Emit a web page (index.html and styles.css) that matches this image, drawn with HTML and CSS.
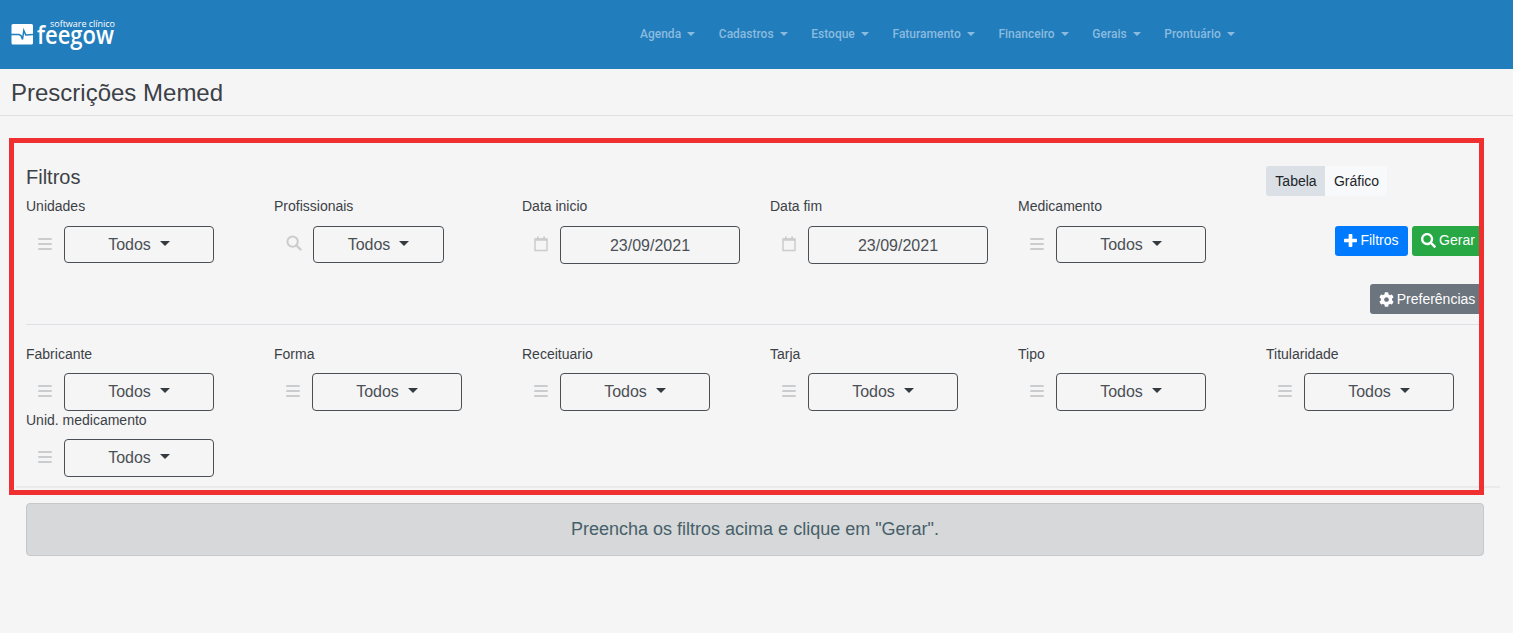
FILE: index.html
```
<!DOCTYPE html>
<html lang="pt-BR">
<head>
<meta charset="utf-8">
<title>Prescrições Memed</title>
<link rel="stylesheet" href="styles.css">
</head>
<body>

<!-- icons -->
<svg class="sprite" width="0" height="0">
	<symbol id="bars" viewBox="0 0 14 14"><path d="M1 2h12M1 7h12M1 12h12" stroke="currentColor" stroke-width="2" stroke-linecap="round"/></symbol>
	<symbol id="search-thin" viewBox="0 0 16 16"><circle cx="6.6" cy="6.6" r="5.200" fill="none" stroke="currentColor" stroke-width="2"/><path d="M10.500 10.500l4 4" stroke="currentColor" stroke-width="2.400" stroke-linecap="round"/></symbol>
	<symbol id="calendar" viewBox="0 0 14 16"><path d="M1 3h12v11.500H1z" fill="none" stroke="currentColor" stroke-width="1.500" stroke-linejoin="round"/><path d="M.7 2.500h12.600v2.200H.7zM3 .5h1.800V3H3zM9.200.5H11V3H9.200z" fill="currentColor"/></symbol>
	<symbol id="plus" viewBox="0 0 448 512"><path fill="currentColor" d="M416 192H288V64c0-17.670-14.330-32-32-32h-64c-17.670 0-32 14.330-32 32v128H32c-17.670 0-32 14.330-32 32v64c0 17.670 14.330 32 32 32h128v128c0 17.670 14.330 32 32 32h64c17.670 0 32-14.330 32-32V320h128c17.670 0 32-14.330 32-32v-64c0-17.670-14.330-32-32-32z"/></symbol>
	<symbol id="search" viewBox="0 0 512 512"><path fill="currentColor" d="M505 442.7L405.3 343c-4.5-4.5-10.6-7-17-7H372c27.600-35.300 44-79.700 44-128C416 93.100 322.900 0 208 0S0 93.100 0 208s93.100 208 208 208c48.300 0 92.700-16.400 128-44v16.300c0 6.400 2.500 12.500 7 17l99.700 99.700c9.400 9.400 24.600 9.400 33.900 0l28.300-28.300c9.400-9.400 9.400-24.600.1-34zM208 336c-70.700 0-128-57.200-128-128 0-70.700 57.200-128 128-128 70.700 0 128 57.200 128 128 0 70.700-57.200 128-128 128z"/></symbol>
	<symbol id="cog" viewBox="0 0 512 512"><path fill="currentColor" d="M487.400 315.700l-42.600-24.600c4.300-23.200 4.300-47 0-70.200l42.600-24.600c4.900-2.800 7.100-8.600 5.500-14-11.100-35.600-30-67.800-54.700-94.600-3.800-4.100-10-5.100-14.800-2.300L380.800 110c-17.900-15.400-38.500-27.300-60.800-35.100V25.800c0-5.600-3.900-10.500-9.400-11.700-36.700-8.200-74.300-7.800-109.200 0-5.500 1.200-9.400 6.100-9.400 11.700V75c-22.200 7.900-42.800 19.800-60.800 35.100L88.700 85.500c-4.900-2.800-11-1.900-14.800 2.300-24.700 26.700-43.600 58.900-54.700 94.600-1.700 5.400.6 11.200 5.500 14L67.300 221c-4.300 23.200-4.300 47 0 70.200l-42.600 24.600c-4.900 2.800-7.100 8.600-5.500 14 11.100 35.600 30 67.800 54.700 94.600 3.800 4.100 10 5.100 14.800 2.300l42.600-24.600c17.900 15.400 38.500 27.300 60.800 35.100v49.200c0 5.600 3.900 10.500 9.400 11.700 36.700 8.200 74.300 7.800 109.200 0 5.500-1.200 9.400-6.100 9.400-11.700v-49.200c22.200-7.900 42.800-19.800 60.800-35.100l42.600 24.600c4.900 2.800 11 1.900 14.800-2.300 24.700-26.700 43.600-58.900 54.700-94.600 1.500-5.500-.7-11.300-5.600-14.100zM256 336c-44.100 0-80-35.900-80-80s35.900-80 80-80 80 35.900 80 80-35.900 80-80 80z"/></symbol>
</svg>

<nav class="navbar">
	<svg class="logo" width="106" height="36" viewBox="0 0 106 36">
		<rect x="0.500" y="8" width="21.500" height="20.500" rx="1.500" fill="#fff"/>
		<path d="M0 18.500h8l2 1 1.500 4 1.300-9 2 4.500 7.200-.5" fill="none" stroke="#227dbc" stroke-width="1.500"/>
		<text class="logo-small" x="39" y="10.500" textLength="65">software clínico</text>
		<text class="logo-big" x="26" y="27.500" textLength="77" lengthAdjust="spacingAndGlyphs">feegow</text>
	</svg>
	<ul class="menu">
		<li>Agenda</li>
		<li>Cadastros</li>
		<li>Estoque</li>
		<li>Faturamento</li>
		<li>Financeiro</li>
		<li>Gerais</li>
		<li>Prontuário</li>
	</ul>
</nav>

<h1 class="title">Prescrições Memed</h1>

<div class="content">
	<div class="top">
		<h2>Filtros</h2>
		<div class="toggle"><button class="active">Tabela</button><button>Gráfico</button></div>
	</div>

	<div class="row first">
		<div class="col"><label>Unidades</label>
			<div class="field"><svg class="ico"><use href="#bars"/></svg><button class="select">Todos</button></div></div>
		<div class="col"><label>Profissionais</label>
			<div class="field"><svg class="ico wide"><use href="#search-thin"/></svg><button class="select short">Todos</button></div></div>
		<div class="col"><label>Data inicio</label>
			<div class="field"><svg class="ico cal"><use href="#calendar"/></svg><input class="date" type="text" value="23/09/2021"></div></div>
		<div class="col"><label>Data fim</label>
			<div class="field"><svg class="ico cal"><use href="#calendar"/></svg><input class="date" type="text" value="23/09/2021"></div></div>
		<div class="col"><label>Medicamento</label>
			<div class="field"><svg class="ico"><use href="#bars"/></svg><button class="select">Todos</button></div></div>
		<div class="actions">
			<button class="btn blue"><svg width="13" height="15"><use href="#plus"/></svg>Filtros</button>
			<button class="btn green"><svg width="15" height="15"><use href="#search"/></svg>Gerar</button>
			<button class="btn gray"><svg width="15" height="15"><use href="#cog"/></svg>Preferências</button>
		</div>
	</div>

	<div class="row more">
		<div class="col"><label>Fabricante</label>
			<div class="field"><svg class="ico"><use href="#bars"/></svg><button class="select">Todos</button></div></div>
		<div class="col"><label>Forma</label>
			<div class="field"><svg class="ico"><use href="#bars"/></svg><button class="select">Todos</button></div></div>
		<div class="col"><label>Receituario</label>
			<div class="field"><svg class="ico"><use href="#bars"/></svg><button class="select">Todos</button></div></div>
		<div class="col"><label>Tarja</label>
			<div class="field"><svg class="ico"><use href="#bars"/></svg><button class="select">Todos</button></div></div>
		<div class="col"><label>Tipo</label>
			<div class="field"><svg class="ico"><use href="#bars"/></svg><button class="select">Todos</button></div></div>
		<div class="col"><label>Titularidade</label>
			<div class="field"><svg class="ico"><use href="#bars"/></svg><button class="select">Todos</button></div></div>
		<div class="col"><label>Unid. medicamento</label>
			<div class="field"><svg class="ico"><use href="#bars"/></svg><button class="select">Todos</button></div></div>
	</div>

	<div class="line"></div>
	<div class="alert">Preencha os filtros acima e clique em "Gerar".</div>
	<div class="highlight"></div>
</div>

</body>
</html>
```
FILE: styles.css
```
* {
    box-sizing: border-box;
}
body {
    margin: 0;
    height: 633px;
    overflow: hidden;
    background-color: #f5f5f5;
    color: #3c4147;
    font-family: "Liberation Sans", Arial, sans-serif;
    font-size: 14px;
}
button, input {
    font-family: inherit;
    margin: 0;
}
.sprite {
    position: absolute;
}

/* top bar */
.navbar {
    display: flex;
    height: 69px;
    padding: 16px 0 0 11px;
    background-color: #227dbc;
}
.logo {
    width: 106px;
    overflow: visible;
}
.logo text {
    fill: #fff;
    font-family: "Open Sans", sans-serif;
}
.logo .logo-small {
    font-size: 9px;
}
.logo .logo-big {
    font-size: 25px;
    font-weight: 600;
}
.menu {
    display: flex;
    align-self: flex-start;
    list-style: none;
    margin: 10px 0 0 523px;
    padding: 0;
    gap: 23.7px;
    font-family: Roboto, sans-serif;
    font-size: 12px;
    font-weight: 500;
    line-height: 16px;
    color: #8abbdf;
}
.menu li {
    display: flex;
    align-items: center;
}
.menu li::after {
    content: "";
    margin-left: 6px;
    border: 4px solid transparent;
    border-top-color: #8abbdf;
    border-bottom: 0;
}
.title {
    margin: 0;
    height: 47px;
    padding-left: 11px;
    border-bottom: 1px solid #dfe0e2;
    font-size: 24px;
    font-weight: 400;
    line-height: 48px;
}

/* filters */
.content {
    position: relative;
    padding: 49px 29px 0 26px;
}
.top {
    display: flex;
    height: 31px;
}
.top h2 {
    margin: 0;
    width: 1240px;
    font-size: 20px;
    font-weight: 400;
    line-height: 24px;
}
.toggle {
    display: flex;
    height: 30px;
    margin-top: 1px;
}
.toggle button {
    border: 0;
    width: 62px;
    padding: 0 0 0 1px;
    background-color: #f8f9fa;
    border-radius: 0 3px 3px 0;
    font-size: 14px;
    color: #212529;
}
.toggle .active {
    width: 59px;
    background-color: #dae0e5;
    border-radius: 3px 0 0 3px;
}
.row {
    display: grid;
    grid-template-columns: repeat(5, 248px) 218px;
}
.first {
    height: 129px;
    border-bottom: 1px solid #dee0e6;
}
.more {
    padding-top: 19px;
}
.col label {
    display: block;
    height: 20px;
    line-height: 20px;
}
.field {
    display: flex;
    align-items: flex-start;
    padding: 9px 0 0 12px;
}
.more .col {
    height: 66px;
}
.first .field {
    padding-top: 10px;
}
.ico {
    width: 14px;
    height: 14px;
    margin: 11px 12px 0 0;
    color: #cbcccd;
}
.ico.wide {
    width: 16px;
    height: 16px;
    margin: 9px 11px 0 0;
}
.ico.cal {
    height: 16px;
    margin-top: 10px;
}
.select, .date {
    width: 150px;
    height: 38px;
    padding: 0;
    border: 1px solid #4b5056;
    border-radius: 4px;
    background-color: transparent;
    color: #4b5056;
    font-size: 16px;
    text-align: center;
}
.date {
    width: 180px;
    padding-top: 1px;
}
.first .select {
    height: 37px;
}
.select::after {
    content: "";
    display: inline-block;
    margin-left: 9px;
    vertical-align: 4px;
    border: 5px solid transparent;
    border-top-color: #343a40;
    border-bottom: 0;
}
.select.short {
    width: 131px;
}
.actions {
    display: flex;
    flex-wrap: wrap;
    justify-content: flex-end;
    align-content: flex-start;
    gap: 28px 4px;
    padding-top: 30px;
}
.btn {
    display: flex;
    align-items: center;
    justify-content: center;
    width: 73px;
    height: 30px;
    padding: 0 0 2px;
    border: 0;
    border-radius: 3px;
    color: #fff;
    font-size: 14px;
    gap: 3px;
}
.blue {
    background-color: #007bff;
}
.green {
    width: 72px;
    background-color: #28a745;
}
.gray {
    width: 114px;
    padding-bottom: 0;
    background-color: #6c757d;
}
.line {
    height: 2px;
    margin: 10px -16px 0 -10px;
    background-color: #e9eaeb;
}
.alert {
    height: 53px;
    margin-top: 15px;
    border: 1px solid #c6c8ca;
    border-radius: 4px;
    background-color: #d6d8d9;
    color: #46606a;
    font-size: 18px;
    line-height: 50px;
    text-align: center;
}

/* red frame over the filter area */
.highlight {
    position: absolute;
    left: 9px;
    top: 22px;
    width: 1475px;
    height: 357px;
    border: 5px solid #f03030;
}
```
